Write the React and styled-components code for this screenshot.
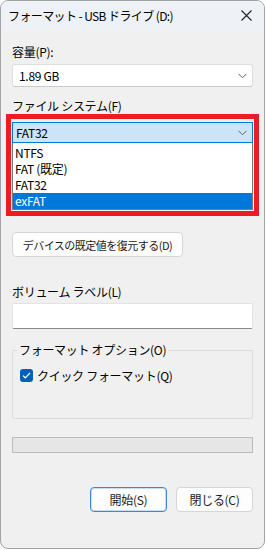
import React from "react";
import styled, { createGlobalStyle } from "styled-components";

const GlobalStyle = createGlobalStyle`
  html, body {
    margin: 0;
    padding: 0;
    background: #ffffff;
  }
  body {
    font-family: "Noto Sans CJK JP", "Noto Sans", sans-serif;
    font-size: 12px;
    letter-spacing: -0.3px;
    color: #000;
  }
`;

const Window = styled.div`
  width: 265px;
  height: 549px;
  box-sizing: border-box;
  border: 1px solid #a3a3a3;
  border-radius: 8px;
  background: #f0f0f0;
  overflow: hidden;
  display: flex;
  flex-direction: column;
`;

const TitleBar = styled.div`
  height: 29px;
  flex-shrink: 0;
  background: #eef2f7;
  display: flex;
  align-items: center;
  justify-content: space-between;
  padding: 0 12px 0 7px;
  font-size: 12px;
  line-height: 16px;
  letter-spacing: -0.6px;
`;

const Body = styled.div`
  padding: 0 11px;
  display: flex;
  flex-direction: column;
`;

const Label = styled.div`
  margin-top: ${(p) => p.$top}px;
  height: 16px;
  line-height: 16px;
  font-size: 12px;
`;

const Combo = styled.div`
  margin-top: ${(p) => p.$top || 0}px;
  height: ${(p) => (p.$open ? 21 : 23)}px;
  box-sizing: border-box;
  border: 1px solid ${(p) => (p.$open ? "#0078d7" : "#dedede")};
  border-bottom-color: ${(p) => (p.$open ? "#0078d7" : "#c9c9c9")};
  border-radius: ${(p) => (p.$open ? 0 : 3)}px;
  background: ${(p) => (p.$open ? "#cce4f7" : "#ffffff")};
  display: flex;
  align-items: center;
  justify-content: space-between;
  padding: 0 5px 0 ${(p) => (p.$open ? 3 : 6)}px;
  font-size: 12px;
`;

const Highlight = styled.div`
  margin: 0 -6px;
  border: 5px solid #ec1c24;
  padding: 3px 1px 1px;
`;

const List = styled.div`
  background: #ffffff;
  border: 1px solid #7a7a7a;
  border-top: none;
  padding-top: 2px;
`;

const Option = styled.div`
  height: 16px;
  line-height: 16px;
  padding-left: 2px;
  font-size: 12px;
  background: ${(p) => (p.$selected ? "#0078d7" : "transparent")};
  color: ${(p) => (p.$selected ? "#ffffff" : "#000000")};
`;

const Button = styled.button`
  margin-top: ${(p) => p.$top || 0}px;
  height: 25px;
  width: ${(p) => p.$width}px;
  box-sizing: border-box;
  background: #fdfdfd;
  border: 1px solid ${(p) => (p.$primary ? "#3d86d6" : "#d6d6d6")};
  box-shadow: ${(p) => (p.$primary ? "inset 0 0 0 1px #c9def4" : "none")};
  border-radius: 4px;
  font-family: inherit;
  font-size: ${(p) => (p.$tight ? 11 : 12)}px;
  letter-spacing: ${(p) => (p.$tight ? "-0.5px" : "inherit")};
  white-space: nowrap;
  color: #1a1a1a;
  padding: 0;
  display: flex;
  align-items: center;
  justify-content: center;
`;

const TextInput = styled.div`
  margin-top: 3px;
  height: 26px;
  box-sizing: border-box;
  background: #ffffff;
  border: 1px solid #e3e3e3;
  border-bottom: 1px solid #8a8a8a;
  border-radius: 2px;
`;

const Group = styled.fieldset`
  margin: 13px 0 0;
  height: 77px;
  box-sizing: border-box;
  border: 1px solid #dcdcdc;
  border-radius: 2px;
  padding: 0 4px;
  min-width: 0;
`;

const Legend = styled.legend`
  padding: 0 2px;
  font-size: 12px;
  line-height: 16px;
`;

const CheckRow = styled.div`
  margin: 9px 0 0 3px;
  display: flex;
  align-items: center;
  gap: 4px;
  height: 16px;
  font-size: 12px;
`;

const CheckBox = styled.span`
  width: 13px;
  height: 13px;
  border-radius: 3px;
  background: #005fb8;
  display: flex;
  align-items: center;
  justify-content: center;
`;

const Progress = styled.div`
  margin-top: 18px;
  height: 16px;
  box-sizing: border-box;
  background: #e6e6e6;
  border: 1px solid #bcbcbc;
`;

const Footer = styled.div`
  margin-top: 34px;
  display: flex;
  justify-content: flex-end;
  gap: 9px;
`;

const Chevron = () => (
  <svg width="9" height="6" viewBox="0 0 9 6">
    <path d="M0.5 0.8 L4.5 4.8 L8.5 0.8" fill="none" stroke="#606060" strokeWidth="1" />
  </svg>
);

const CloseIcon = () => (
  <svg width="11" height="11" viewBox="0 0 11 11">
    <path d="M0.5 0.5 L10.5 10.5 M10.5 0.5 L0.5 10.5" stroke="#222" strokeWidth="1.1" />
  </svg>
);

const Check = () => (
  <svg width="9" height="7" viewBox="0 0 9 7">
    <path d="M1 3.6 L3.3 5.8 L8 1" fill="none" stroke="#fff" strokeWidth="1.2" />
  </svg>
);

const App = () => {
  const fileSystems = ["NTFS", "FAT (既定)", "FAT32", "exFAT"];
  return (
    <>
      <GlobalStyle />
      <Window>
        <TitleBar>
          <span>フォーマット - USB ドライブ (D:)</span>
          <CloseIcon />
        </TitleBar>
        <Body>
          <Label $top={14}>容量(P):</Label>
          <Combo $top={4}>
            <span>1.89 GB</span>
            <Chevron />
          </Combo>

          <Label $top={11}>ファイル システム(F)</Label>
          <Highlight>
            <Combo $open>
              <span>FAT32</span>
              <Chevron />
            </Combo>
            <List>
              {fileSystems.map((fs) => (
                <Option key={fs} $selected={fs === "exFAT"}>
                  {fs}
                </Option>
              ))}
            </List>
          </Highlight>

          <Button $top={16} $width={171} $tight>デバイスの既定値を復元する(D)</Button>

          <Label $top={27}>ボリューム ラベル(L)</Label>
          <TextInput />

          <Group>
            <Legend>フォーマット オプション(O)</Legend>
            <CheckRow>
              <CheckBox>
                <Check />
              </CheckBox>
              <span>クイック フォーマット(Q)</span>
            </CheckRow>
          </Group>

          <Progress />

          <Footer>
            <Button $primary $width={77}>開始(S)</Button>
            <Button $width={77}>閉じる(C)</Button>
          </Footer>
        </Body>
      </Window>
    </>
  );
};

export default App;
